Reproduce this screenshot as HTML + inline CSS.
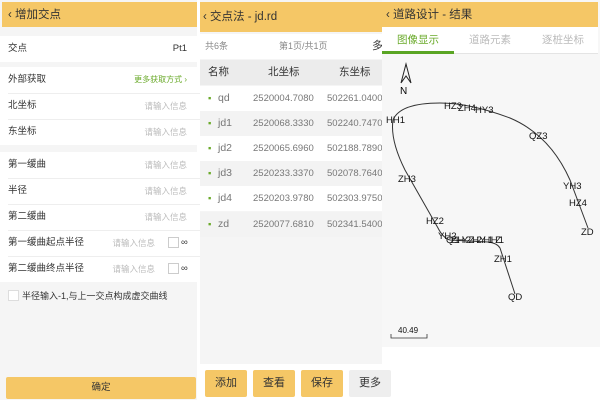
<!DOCTYPE html>
<html><head><meta charset="utf-8"><style>
*{margin:0;padding:0;box-sizing:border-box}
body{width:600px;height:400px;background:#fff;position:relative;overflow:hidden;font-family:"Liberation Sans","Noto Sans CJK SC",sans-serif;font-size:9px;color:#333}
.abs{position:absolute}
.hdr{background:#f5c766;color:#333;font-size:11.5px;line-height:26px;padding-left:6px}
.row{position:absolute;left:0;width:197px;height:26px;background:#fff;line-height:26px;padding-left:8px;font-size:9.5px}
.row .r{position:absolute;right:10px;top:0;color:#bbb}
.sep{position:absolute;left:8px;right:6px;height:1px;background:#eee}
.ph{color:#c4c4c4}
.tr{position:absolute;left:200px;width:182px;height:25px;line-height:25px;font-size:9.5px;color:#777}
.tr span{position:absolute}
.btn{position:absolute;top:370px;height:27px;line-height:27px;text-align:center;font-size:11px;background:#f5c766;border-radius:2px}
</style></head><body>
<div class="abs" style="left:0;top:0;width:197px;height:400px;background:#f5f5f5"></div>
<div class="abs hdr" style="left:2px;top:2px;width:195px;height:25px">‹ 增加交点</div>
<div class="row" style="top:36px">交点<span class="r" style="color:#333">Pt1</span></div>
<div class="row" style="top:67px">外部获取<span class="r" style="color:#6aaa2a;font-size:8px">更多获取方式 ›</span></div>
<div class="row" style="top:93px">北坐标<span class="r ph" style="font-size:8.5px">请输入信息</span></div>
<div class="row" style="top:119px">东坐标<span class="r ph" style="font-size:8.5px">请输入信息</span></div>
<div class="sep" style="top:93px"></div><div class="sep" style="top:119px"></div>
<div class="row" style="top:152px">第一缓曲<span class="r ph" style="font-size:8.5px">请输入信息</span></div>
<div class="row" style="top:178px">半径<span class="r ph" style="font-size:8.5px">请输入信息</span></div>
<div class="row" style="top:204px">第二缓曲<span class="r ph" style="font-size:8.5px">请输入信息</span></div>
<div class="row" style="top:230px">第一缓曲起点半径<span class="r ph" style="right:42px;font-size:8.5px">请输入信息</span><span class="abs" style="left:168px;top:7px;width:11px;height:11px;border:1px solid #ccc;background:#fff"></span><span class="abs" style="left:181px;top:0;color:#333">∞</span></div>
<div class="row" style="top:256px">第二缓曲终点半径<span class="r ph" style="right:42px;font-size:8.5px">请输入信息</span><span class="abs" style="left:168px;top:7px;width:11px;height:11px;border:1px solid #ccc;background:#fff"></span><span class="abs" style="left:181px;top:0;color:#333">∞</span></div>
<div class="sep" style="top:178px"></div><div class="sep" style="top:204px"></div><div class="sep" style="top:230px"></div><div class="sep" style="top:256px"></div>
<div class="abs" style="left:8px;top:290px;width:11px;height:11px;border:1px solid #ddd;background:#fff"></div>
<div class="abs" style="left:22px;top:289px;font-size:9px">半径输入-1,与上一交点构成虚交曲线</div>
<div class="abs" style="left:6px;top:377px;width:190px;height:22px;background:#f5c766;border-radius:2px;text-align:center;line-height:22px;font-size:9.5px">确定</div>
<div class="abs" style="left:200px;top:0;width:182px;height:400px;background:#f5f5f5"></div>
<div class="abs hdr" style="left:200px;top:2px;width:182px;height:30px;line-height:30px;font-size:11.5px;padding-left:3px">‹ 交点法 - jd.rd</div>
<div class="abs" style="left:200px;top:34px;width:182px;height:25px;background:#fff;line-height:25px;font-size:9px;color:#888"><span class="abs" style="left:5px">共6条</span><span class="abs" style="left:79px">第1页/共1页</span><span class="abs" style="left:172px;color:#333;font-size:11px">多</span></div>
<div class="tr" style="top:60px;background:#ececec;color:#333;font-size:10.5px"><span style="left:8px">名称</span><span style="left:68px">北坐标</span><span style="left:139px">东坐标</span></div>
<div class="tr" style="top:86px;background:#fff"><span style="left:8px;color:#6aaa2a">▪</span><span style="left:18px;font-size:10.5px">qd</span><span style="left:53px">2520004.7080</span><span style="left:127px">502261.0400</span></div>
<div class="tr" style="top:111px;background:#f3f3f3"><span style="left:8px;color:#6aaa2a">▪</span><span style="left:18px;font-size:10.5px">jd1</span><span style="left:53px">2520068.3330</span><span style="left:127px">502240.7470</span></div>
<div class="tr" style="top:136px;background:#fff"><span style="left:8px;color:#6aaa2a">▪</span><span style="left:18px;font-size:10.5px">jd2</span><span style="left:53px">2520065.6960</span><span style="left:127px">502188.7890</span></div>
<div class="tr" style="top:161px;background:#f3f3f3"><span style="left:8px;color:#6aaa2a">▪</span><span style="left:18px;font-size:10.5px">jd3</span><span style="left:53px">2520233.3370</span><span style="left:127px">502078.7640</span></div>
<div class="tr" style="top:186px;background:#fff"><span style="left:8px;color:#6aaa2a">▪</span><span style="left:18px;font-size:10.5px">jd4</span><span style="left:53px">2520203.9780</span><span style="left:127px">502303.9750</span></div>
<div class="tr" style="top:212px;background:#f3f3f3"><span style="left:8px;color:#6aaa2a">▪</span><span style="left:18px;font-size:10.5px">zd</span><span style="left:53px">2520077.6810</span><span style="left:127px">502341.5400</span></div>
<div class="abs" style="left:200px;top:364px;width:200px;height:36px;background:#fff"></div>
<div class="btn" style="left:205px;width:42px">添加</div>
<div class="btn" style="left:253px;width:42px">查看</div>
<div class="btn" style="left:301px;width:42px">保存</div>
<div class="btn" style="left:349px;width:42px;background:#eee">更多</div>
<div class="abs" style="left:382px;top:0;width:218px;height:347px;background:#f7f7f7"></div>
<div class="abs hdr" style="left:382px;top:2px;width:216px;height:25px;padding-left:4px">‹ 道路设计 - 结果</div>
<div class="abs" style="left:382px;top:27px;width:216px;height:27px;background:#fff;font-size:10.5px;line-height:26px;color:#bbb;border-bottom:1px solid #e4e4e4">
<span class="abs" style="left:15px;color:#6aaa2a">图像显示</span><span class="abs" style="left:87px">道路元素</span><span class="abs" style="left:160px">逐桩坐标</span>
<div class="abs" style="left:0;top:24px;width:72px;height:3px;background:#5aa524"></div></div>
<svg class="abs" style="left:0;top:0" width="600" height="400">
<path d="M401,83 L406,64 L411,83 L406,76 Z" fill="none" stroke="#222" stroke-width="1"/>
<text x="400" y="94" font-size="10" font-family="Liberation Sans">N</text>
<path d="M515,294 L500,248 Q497,243 488,242 L450,240 Q443,238 438,228 L405,170 Q390,140 393,120 Q400,103 440,103 Q470,103 510,118 Q550,135 570,180 L588,228" fill="none" stroke="#333" stroke-width="1"/>
<g font-size="9.5" font-family="Liberation Sans" fill="#111">
<text x="508" y="300">QD</text><text x="494" y="262">ZH1</text><text x="426" y="224">HZ2</text>
<text x="438" y="239">YH2</text><text x="446" y="243" textLength="58">QZ1HY2ZH2YH1HZ1</text>
<text x="398" y="182">ZH3</text><text x="386" y="123">HH1</text><text x="444" y="109">HZ3</text>
<text x="458" y="111">ZH4</text><text x="475" y="113">HY3</text><text x="529" y="139">QZ3</text>
<text x="563" y="189">YH3</text><text x="569" y="206">HZ4</text><text x="581" y="235">ZD</text>
<text x="398" y="333" font-size="8">40.49</text>
</g>
<path d="M391,334 V338 H427 V334" fill="none" stroke="#333" stroke-width="0.8"/>
</svg>
</body></html>
